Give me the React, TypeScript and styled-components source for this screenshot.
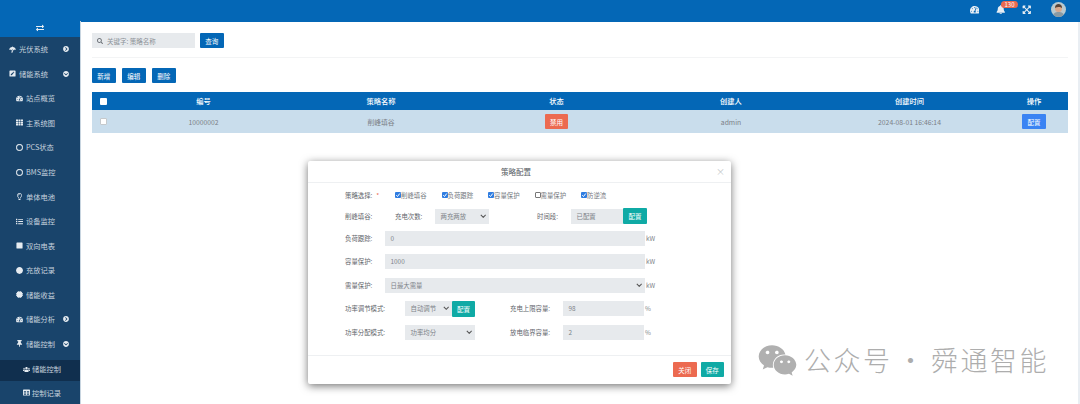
import React from 'react'
import styled, { createGlobalStyle } from 'styled-components'
import {
  FaBell,
  FaCertificate,
  FaChevronCircleDown,
  FaChevronCircleRight,
  FaCircle,
  FaExchangeAlt,
  FaExpandArrowsAlt,
  FaList,
  FaPenSquare,
  FaRegCircle,
  FaRegLightbulb,
  FaSearch,
  FaSquare,
  FaTable,
  FaTachometerAlt,
  FaTh,
  FaThumbtack,
  FaUmbrella,
  FaUsers,
  FaWeixin,
} from 'react-icons/fa'

const Colors = {
  Blue: '#0467b6',
  Navy: '#19446b',
  NavyDark: '#102f4e',
  Row: '#c9ddec',
  Red: '#ec6a50',
  Teal: '#0faaa5',
  Field: '#e7eaed',
  Text: '#7b8086',
}

const GlobalStyle = createGlobalStyle`
  html, body {
    margin: 0;
    height: 100%;
    background: #fff;
  }
  body {
    font-family: "Noto Sans CJK SC", "Open Sans", sans-serif;
    font-size: 7.25px;
    color: ${Colors.Text};
    overflow: hidden;
  }
  * { box-sizing: border-box; }
`

const Page = styled.div`
  position: relative;
  width: 1080px;
  height: 404px;
  display: flex;
  flex-direction: column;
  overflow: hidden;
`

const TopBar = styled.header`
  height: 22px;
  flex: none;
  background: ${Colors.Blue};
  color: #e8eef4;
  display: flex;
  align-items: center;
  justify-content: flex-end;
  padding-right: 14px;
  padding-bottom: 3px;
`

const TopIcon = styled.span<{ $mr: number }>`
  position: relative;
  display: flex;
  font-size: 9.5px;
  margin-right: ${p => p.$mr}px;
`

const Badge = styled.span`
  position: absolute;
  left: 5px;
  top: -4px;
  width: 17px;
  height: 7px;
  border-radius: 4px;
  background: ${Colors.Red};
  color: #fff;
  font-size: 6px;
  line-height: 7px;
  text-align: center;
`

const Avatar = styled.svg`
  width: 15px;
  height: 15px;
  border-radius: 50%;
`

const Main = styled.div`
  flex: 1;
  display: flex;
  min-height: 0;
`

const Sidebar = styled.nav`
  width: 81px;
  flex: none;
  margin-top: -1px;
  background: ${Colors.Navy};
  border-right: 1px solid #c8d5e0;
`

const Toggle = styled.div`
  height: 16px;
  padding-bottom: 2px;
  background: ${Colors.Blue};
  color: #e8eef4;
  font-size: 8px;
  display: flex;
  align-items: center;
  justify-content: center;
`

const NavItem = styled.div<{ $level: number; $active?: boolean }>`
  height: ${p => (p.$active ? 21 : 24.55)}px;
  margin-top: ${p => (p.$active ? 3.5 : 0)}px;
  padding-bottom: ${p => (p.$active ? 2 : 0)}px;
  display: flex;
  align-items: center;
  padding-left: ${p => (p.$level === 0 ? 9 : p.$level === 1 ? 16 : 23)}px;
  padding-right: 11px;
  background: ${p => (p.$active ? Colors.NavyDark : 'transparent')};
  color: #c6d2de;
  white-space: nowrap;

  & > svg:first-child {
    width: 7px;
    height: 7px;
    margin-right: ${p => (p.$level === 2 ? 2 : 3)}px;
    flex: none;
    color: #e6ecf1;
  }
`

const NavArrow = styled.span`
  margin-left: auto;
  display: flex;
  font-size: 6px;
  color: #e6ecf1;
`

const RingIcon = styled(FaRegCircle)`
  stroke-width: 40px;
`

const Content = styled.main`
  flex: 1;
  display: flex;
  background: #e9eef3;
  padding-right: 2px;
`

const Panel = styled.div`
  flex: 1;
  background: #fff;
  padding: 11px 10px 0 11px;
`

const SearchRow = styled.div`
  display: flex;
  gap: 5px;
  height: 15px;
  margin-bottom: 9px;
`

const SearchBox = styled.div`
  width: 103px;
  background: ${Colors.Field};
  color: #8c9197;
  display: flex;
  align-items: center;
  gap: 4px;
  padding-left: 5px;
  font-size: 6.5px;

  svg {
    font-size: 6px;
    color: #6d7278;
  }
`

const Button = styled.button<{ $bg?: string; $w?: number; $h?: number }>`
  border: 0;
  padding: 0;
  width: ${p => p.$w ?? 23.5}px;
  height: ${p => p.$h ?? 15}px;
  background: ${p => p.$bg ?? Colors.Blue};
  color: #fff;
  font: inherit;
  font-size: 6.5px;
  border-radius: 1px;
  flex: none;
`

const Divider = styled.div`
  height: 1px;
  background: #f3f4f5;
`

const ActionRow = styled.div`
  display: flex;
  gap: 6.5px;
  margin: 10px 0 9px;
`

const Table = styled.table`
  width: 100%;
  border-collapse: collapse;
  table-layout: fixed;
  text-align: center;

  th {
    background: ${Colors.Blue};
    color: #fff;
    height: 18px;
    padding: 0;
    font-weight: 500;
    font-size: 7.25px;
  }

  td {
    background: ${Colors.Row};
    height: 23px;
    padding: 0;
    color: ${Colors.Text};
    font-size: 6.8px;
  }
`

const TableBox = styled.span<{ $light?: boolean }>`
  display: block;
  width: 7px;
  height: 7px;
  margin-left: 8px;
  background: #fff;
  border-radius: 1px;
  border: ${p => (p.$light ? '1px solid #c5c9cc' : 'none')};
`

const Modal = styled.section`
  position: absolute;
  left: 308px;
  top: 161px;
  width: 423px;
  height: 223px;
  background: #fff;
  border-radius: 2px;
  box-shadow: 0 2px 8px rgba(0, 0, 0, 0.55);
  display: flex;
  flex-direction: column;
  font-size: 6.4px;
`

const ModalHead = styled.div`
  height: 22px;
  flex: none;
  position: relative;
  border-bottom: 1px solid #eef0f2;
  padding-right: 7px;
  text-align: center;
  line-height: 21px;
  font-size: 7.5px;
  color: #555b61;
`

const Close = styled.span`
  position: absolute;
  right: 6px;
  top: 0;
  color: #c4c7ca;
  font-size: 9px;
`

const ModalBody = styled.div`
  flex: 1;
  padding: 1px 0 0 37px;
  display: flex;
  flex-direction: column;
`

const FormRow = styled.div<{ $h: number }>`
  height: ${p => p.$h}px;
  display: flex;
  align-items: center;
  flex: none;
`

const Label = styled.label<{ $w: number; $ml?: number }>`
  width: ${p => p.$w}px;
  margin-left: ${p => p.$ml ?? 0}px;
  flex: none;
  color: #5f656b;
  white-space: nowrap;
`

const Star = styled.span`
  color: ${Colors.Red};
  margin-left: 4px;
`

const CheckItem = styled.span`
  width: 46.5px;
  display: flex;
  align-items: center;
  color: #73787e;
  white-space: nowrap;
`

const CheckBox = styled.span<{ $on?: boolean }>`
  width: 6px;
  height: 6px;
  flex: none;
  border-radius: 1px;
  background: ${p => (p.$on ? '#2f7de1' : '#fff')};
  border: ${p => (p.$on ? 'none' : '1px solid #777')};
  display: flex;
  align-items: center;
  justify-content: center;

  svg {
    width: 6px;
    height: 6px;
  }
`

const Field = styled.div<{ $w: number }>`
  width: ${p => p.$w}px;
  height: 15px;
  flex: none;
  background: ${Colors.Field};
  color: #7d8288;
  display: flex;
  align-items: center;
  justify-content: space-between;
  padding: 0 3px 0 5.5px;

  svg {
    width: 6.5px;
    height: 4.5px;
  }
`

const Unit = styled.span`
  color: #7d8288;
  margin-left: 1px;
`

const ModalFoot = styled.div`
  height: 29px;
  flex: none;
  border-top: 1px solid #eef0f2;
  display: flex;
  justify-content: flex-end;
  align-items: center;
  gap: 4px;
  padding: 0 7px 1px 0;
`

const Watermark = styled.div`
  position: absolute;
  left: 757px;
  top: 342px;
  display: flex;
  align-items: center;
  color: #adadad;
  font-size: 27px;
  font-weight: 300;
  letter-spacing: 2.5px;
  line-height: 36px;
  white-space: nowrap;

  svg {
    width: 41px;
    height: 35px;
    margin-right: 6px;
    color: #b0b0b0;
  }
`

const WatermarkDot = styled.span`
  margin: 0 4.5px;
`

const navItems: { label: string; icon: React.ReactNode; level: number; arrow?: 'right' | 'down'; active?: boolean }[] = [
  { label: '光伏系统', icon: <FaUmbrella />, level: 0, arrow: 'right' },
  { label: '储能系统', icon: <FaPenSquare />, level: 0, arrow: 'down' },
  { label: '站点概览', icon: <FaTachometerAlt />, level: 1 },
  { label: '主系统图', icon: <FaTh />, level: 1 },
  { label: 'PCS状态', icon: <RingIcon />, level: 1 },
  { label: 'BMS监控', icon: <RingIcon />, level: 1 },
  { label: '单体电池', icon: <FaRegLightbulb />, level: 1 },
  { label: '设备监控', icon: <FaList />, level: 1 },
  { label: '双向电表', icon: <FaSquare />, level: 1 },
  { label: '充放记录', icon: <FaCircle />, level: 1 },
  { label: '储能收益', icon: <FaCertificate />, level: 1 },
  { label: '储能分析', icon: <FaTachometerAlt />, level: 1, arrow: 'right' },
  { label: '储能控制', icon: <FaThumbtack />, level: 1, arrow: 'down' },
  { label: '储能控制', icon: <FaUsers />, level: 2, active: true },
  { label: '控制记录', icon: <FaTable />, level: 2 },
]

const checks = [
  { label: '削峰填谷', on: true },
  { label: '负荷跟踪', on: true },
  { label: '容量保护', on: true },
  { label: '需量保护', on: false },
  { label: '防逆流', on: true },
]

const Chevron = () => (
  <svg viewBox="0 0 12 8">
    <path d="M1.5 1.5 6 6l4.5-4.5" fill="none" stroke="#555" strokeWidth="2" />
  </svg>
)

const Tick = () => (
  <svg viewBox="0 0 12 12">
    <path d="M2.5 6.5 5 9l4.5-6" fill="none" stroke="#fff" strokeWidth="2" />
  </svg>
)

export default function App() {
  return (
    <Page>
      <GlobalStyle />
      <TopBar>
        <TopIcon $mr={17}>
          <FaTachometerAlt />
        </TopIcon>
        <TopIcon $mr={16}>
          <FaBell />
          <Badge>130</Badge>
        </TopIcon>
        <TopIcon $mr={20}>
          <FaExpandArrowsAlt />
        </TopIcon>
        <Avatar viewBox="0 0 30 30">
          <rect width="30" height="30" fill="#b9c9cf" />
          <path d="M3 30c1-8 6-10 12-10s11 2 12 10z" fill="#8a9aa3" />
          <circle cx="15" cy="13" r="7" fill="#d9a88c" />
          <path d="M8 12c0-6 3-8 7-8s7 2 7 8c-3-3-10-3-14 0z" fill="#5a4438" />
        </Avatar>
      </TopBar>
      <Main>
        <Sidebar>
          <Toggle>
            <FaExchangeAlt />
          </Toggle>
          {navItems.map((item, i) => (
            <NavItem key={i} $level={item.level} $active={item.active}>
              {item.icon}
              {item.label}
              {item.arrow && (
                <NavArrow>{item.arrow === 'right' ? <FaChevronCircleRight /> : <FaChevronCircleDown />}</NavArrow>
              )}
            </NavItem>
          ))}
        </Sidebar>
        <Content>
          <Panel>
            <SearchRow>
              <SearchBox>
                <FaSearch />
                关键字: 策略名称
              </SearchBox>
              <Button>查询</Button>
            </SearchRow>
            <Divider />
            <ActionRow>
              <Button>新增</Button>
              <Button>编辑</Button>
              <Button>删除</Button>
            </ActionRow>
            <Table>
              <colgroup>
                <col style={{ width: 23 }} />
                <col style={{ width: 177 }} />
                <col style={{ width: 178 }} />
                <col style={{ width: 173 }} />
                <col style={{ width: 176 }} />
                <col style={{ width: 181 }} />
                <col />
              </colgroup>
              <thead>
                <tr>
                  <th>
                    <TableBox />
                  </th>
                  <th>编号</th>
                  <th>策略名称</th>
                  <th>状态</th>
                  <th>创建人</th>
                  <th>创建时间</th>
                  <th>操作</th>
                </tr>
              </thead>
              <tbody>
                <tr>
                  <td>
                    <TableBox $light />
                  </td>
                  <td>10000002</td>
                  <td>削峰填谷</td>
                  <td>
                    <Button $bg={Colors.Red}>禁用</Button>
                  </td>
                  <td>admin</td>
                  <td>2024-08-01 16:46:14</td>
                  <td>
                    <Button $bg="#3a83f3">配置</Button>
                  </td>
                </tr>
              </tbody>
            </Table>
          </Panel>
        </Content>
      </Main>

      <Modal>
        <ModalHead>
          策略配置
          <Close>×</Close>
        </ModalHead>
        <ModalBody>
          <FormRow $h={22}>
            <Label $w={50}>
              策略选择:<Star>*</Star>
            </Label>
            {checks.map(c => (
              <CheckItem key={c.label}>
                <CheckBox $on={c.on}>{c.on && <Tick />}</CheckBox>
                {c.label}
              </CheckItem>
            ))}
          </FormRow>
          <FormRow $h={20}>
            <Label $w={50}>削峰填谷:</Label>
            <Label $w={40}>充电次数:</Label>
            <Field $w={54}>
              两充两放
              <Chevron />
            </Field>
            <Label $w={34} $ml={48}>时间段:</Label>
            <Field $w={52}>已配置</Field>
            <Button $bg={Colors.Teal} $w={24} $h={16}>配置</Button>
          </FormRow>
          <FormRow $h={24}>
            <Label $w={40}>负荷跟踪:</Label>
            <Field $w={260}>0</Field>
            <Unit>kW</Unit>
          </FormRow>
          <FormRow $h={23}>
            <Label $w={40}>容量保护:</Label>
            <Field $w={260}>1000</Field>
            <Unit>kW</Unit>
          </FormRow>
          <FormRow $h={24}>
            <Label $w={40}>需量保护:</Label>
            <Field $w={260}>
              日最大需量
              <Chevron />
            </Field>
            <Unit>kW</Unit>
          </FormRow>
          <FormRow $h={23}>
            <Label $w={60}>功率调节模式:</Label>
            <Field $w={47}>
              自动调节
              <Chevron />
            </Field>
            <Button $bg={Colors.Teal} $w={23} $h={16}>配置</Button>
            <Label $w={53} $ml={35}>充电上限容量:</Label>
            <Field $w={81}>98</Field>
            <Unit>%</Unit>
          </FormRow>
          <FormRow $h={24}>
            <Label $w={60}>功率分配模式:</Label>
            <Field $w={70}>
              功率均分
              <Chevron />
            </Field>
            <Label $w={53} $ml={35}>放电临界容量:</Label>
            <Field $w={81}>2</Field>
            <Unit>%</Unit>
          </FormRow>
        </ModalBody>
        <ModalFoot>
          <Button $bg={Colors.Red}>关闭</Button>
          <Button $bg={Colors.Teal}>保存</Button>
        </ModalFoot>
      </Modal>

      <Watermark>
        <FaWeixin />
        公众号<WatermarkDot>·</WatermarkDot>舜通智能
      </Watermark>
    </Page>
  )
}
